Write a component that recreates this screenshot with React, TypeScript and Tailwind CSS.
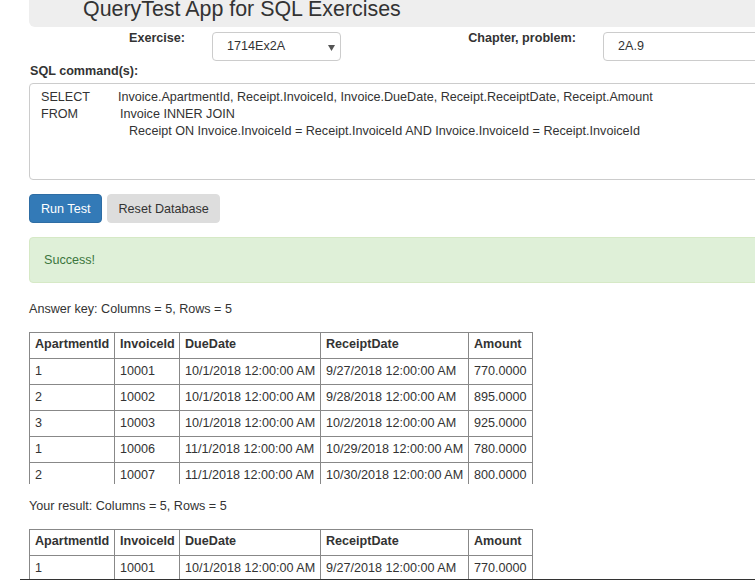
import type { ReactNode } from 'react'

const ROWS = [
  ['1', '10001', '10/1/2018 12:00:00 AM', '9/27/2018 12:00:00 AM', '770.0000'],
  ['2', '10002', '10/1/2018 12:00:00 AM', '9/28/2018 12:00:00 AM', '895.0000'],
  ['3', '10003', '10/1/2018 12:00:00 AM', '10/2/2018 12:00:00 AM', '925.0000'],
  ['1', '10006', '11/1/2018 12:00:00 AM', '10/29/2018 12:00:00 AM', '780.0000'],
  ['2', '10007', '11/1/2018 12:00:00 AM', '10/30/2018 12:00:00 AM', '800.0000'],
]

const HEADS = ['ApartmentId', 'InvoiceId', 'DueDate', 'ReceiptDate', 'Amount']

function ResultTable({ rows }: { rows: string[][] }) {
  return (
    <table className="table-fixed border-collapse w-[503px]">
      <colgroup>
        <col className="w-[85px]" />
        <col className="w-[65px]" />
        <col className="w-[141px]" />
        <col className="w-[148px]" />
        <col className="w-[64px]" />
      </colgroup>
      <thead>
        <tr>
          {HEADS.map((h) => (
            <th
              key={h}
              className="border border-[#888] px-[5px] pt-[3px] pb-[5px] text-left align-bottom font-bold leading-[17px] whitespace-nowrap"
            >
              {h}
            </th>
          ))}
        </tr>
      </thead>
      <tbody>
        {rows.map((r, i) => (
          <tr key={i}>
            {r.map((c, j) => (
              <td key={j} className="border border-[#888] px-[5px] pt-[4px] pb-[4px] leading-[17px] whitespace-nowrap">
                {c}
              </td>
            ))}
          </tr>
        ))}
      </tbody>
    </table>
  )
}

function Label({ children, className = '' }: { children: ReactNode; className?: string }) {
  return <div className={`font-bold leading-[18px] ${className}`}>{children}</div>
}

export default function App() {
  return (
    <div className="relative h-[580px] w-[755px] overflow-hidden bg-white font-['Liberation_Sans',Arial,sans-serif] text-[12.6px] text-[#333]">
      {/* page header, top is scrolled off */}
      <div className="ml-[29px] h-[27px] overflow-hidden rounded-bl-[6px] bg-[#eee]">
        <h2 className="-mt-[1px] pl-[54px] text-[21.4px] leading-[21px] font-normal whitespace-nowrap">
          QueryTest App for SQL Exercises
        </h2>
      </div>

      <div className="flex">
        <div className="w-[212px] shrink-0 pt-[2px] pr-[27px] text-right">
          <Label>Exercise:</Label>
        </div>
        <div className="mt-[5px] flex h-[29px] w-[129px] shrink-0 items-center justify-between rounded-[4px] border border-[#ccc] pr-[5px] pl-[14px]">
          <span>1714Ex2A</span>
          <svg width="7" height="6" viewBox="0 0 7 6" className="mt-[2px]">
            <polygon points="0,0 7,0 3.5,6" fill="#555" />
          </svg>
        </div>
        <div className="w-[262px] shrink-0 pt-[2px] pr-[27px] text-right">
          <Label>Chapter, problem:</Label>
        </div>
        <div className="mt-[5px] flex h-[29px] w-[220px] shrink-0 items-center rounded-[4px] border border-[#ccc] pl-[14px]">
          2A.9
        </div>
      </div>

      <div className="pl-[29px]">
        <Label className="mt-[1px] pl-px">SQL command(s):</Label>

        <div className="mt-[3px] h-[97px] w-[760px] rounded-[4px] border border-[#ccc] pt-[5px] pl-[11px] leading-[17px] whitespace-nowrap">
          <div className="flex">
            <span className="w-[77px] shrink-0">SELECT</span>
            <span>Invoice.ApartmentId, Receipt.InvoiceId, Invoice.DueDate, Receipt.ReceiptDate, Receipt.Amount</span>
          </div>
          <div className="flex">
            <span className="w-[79px] shrink-0">FROM</span>
            <span>Invoice INNER JOIN</span>
          </div>
          <div className="pl-[88px]">
            Receipt ON Invoice.InvoiceId = Receipt.InvoiceId AND Invoice.InvoiceId = Receipt.InvoiceId
          </div>
        </div>

        <div className="mt-[14px] flex gap-[5px]">
          <button className="h-[29px] rounded-[4px] border border-[#2e6da4] bg-[#337ab7] px-[11px] leading-[18px] text-white">
            Run Test
          </button>
          <button className="h-[29px] rounded-[4px] border border-[#ddd] bg-[#ddd] px-[10px] leading-[18px] text-[#333]">
            Reset Database
          </button>
        </div>

        <div className="mt-[14px] w-[760px] rounded-[4px] border border-[#d6e9c6] bg-[#dff0d8] px-[14px] py-[13px] leading-[18px] text-[#3c763d]">
          Success!
        </div>

        <p className="mt-[17px] leading-[18px]">Answer key: Columns = 5, Rows = 5</p>
        <div className="mt-[14px] h-[152px] overflow-hidden">
          <ResultTable rows={ROWS} />
        </div>

        <p className="mt-[13px] leading-[18px]">Your result: Columns = 5, Rows = 5</p>
        <div className="mt-[14px] h-[50px] overflow-hidden">
          <ResultTable rows={ROWS} />
        </div>
      </div>
      <div className="ml-[20px] h-px bg-[#333]" />
    </div>
  )
}
